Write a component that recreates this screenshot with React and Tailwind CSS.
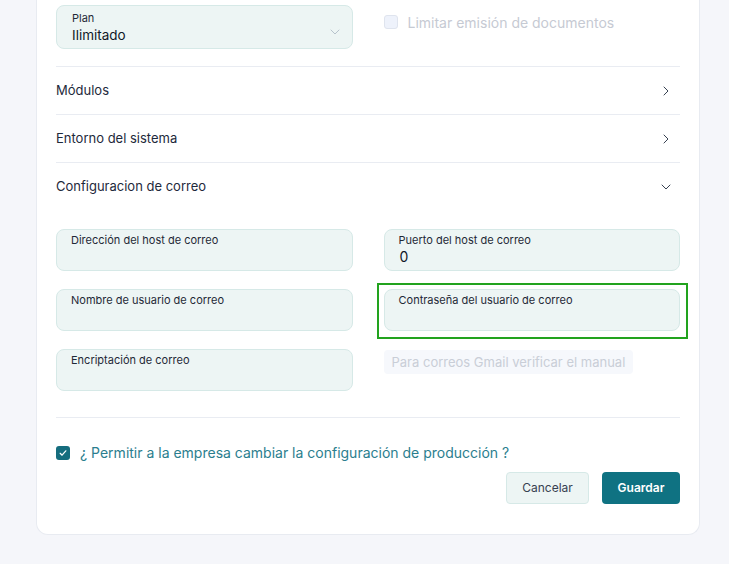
import React from 'react';

// Chevron simple en svg
function Chevron({ dir = 'right', className = '' }) {
    const d = dir === 'right' ? 'M9 6l6 6-6 6' : 'M6 9l6 6 6-6';
    return (
        <svg viewBox="0 0 24 24" className={className} fill="none" stroke="currentColor" strokeWidth="1.5" strokeLinecap="round" strokeLinejoin="round">
            <path d={d} />
        </svg>
    );
}

// Campo con etiqueta flotante
function Field({ label, value }) {
    return (
        <div className="h-[42px] rounded-lg border border-[#d6e9e7] bg-[#edf5f4] px-[14px] pt-[2px]">
            <p className="text-[11px] leading-[16px] text-[#1f2937]">{label}</p>
            {value && <p className="text-[14px] leading-[18px] text-[#111827] pl-[1px]">{value}</p>}
        </div>
    );
}

function Row({ title, open }) {
    return (
        <div className="flex h-[48px] items-center justify-between border-t border-[#e9ecf2] pr-[6px]">
            <span className="text-[13px] text-[#1e293b]">{title}</span>
            <Chevron dir={open ? 'down' : 'right'} className="h-[16px] w-[16px] text-[#374151]" />
        </div>
    );
}

export default function App() {
    return (
        <main className="h-[564px] w-full overflow-hidden bg-[#f5f6fa]" style={{ fontFamily: 'Inter, "Noto Sans", sans-serif' }}>
            <section className="ml-[36px] w-[664px] rounded-b-xl border-x border-b border-[#e8ebf1] bg-white px-[19px] pt-[5px] pb-[30px]">
                {/* Plan */}
                <div className="grid grid-cols-2 gap-x-[31px]">
                    <div className="relative h-[44px] rounded-lg border border-[#d6e9e7] bg-[#edf5f4] px-[15px] pt-[5px]">
                        <p className="text-[11px] leading-[14px] text-[#1f2937]">Plan</p>
                        <p className="text-[13.5px] leading-[20px] text-[#111827]">Ilimitado</p>
                        <Chevron dir="down" className="absolute right-[9px] top-[18px] h-[16px] w-[16px] text-[#b7c3cc]" />
                    </div>
                    <label className="flex h-[34px] items-center gap-[10px]">
                        <span className="h-[14px] w-[14px] rounded-[3px] border border-[#dfe4ee] bg-[#eef2fb]" />
                        <span className="text-[14px] text-[#c6cad3]">Limitar emisión de documentos</span>
                    </label>
                </div>

                {/* Secciones */}
                <div className="mt-[17px]">
                    <Row title="Módulos" />
                    <Row title="Entorno del sistema" />
                    <Row title="Configuracion de correo" open />
                </div>

                {/* Configuración de correo */}
                <div className="mt-[19px] grid grid-cols-2 gap-x-[31px] gap-y-[18px]">
                    <Field label="Dirección del host de correo" />
                    <Field label="Puerto del host de correo" value="0" />
                    <Field label="Nombre de usuario de correo" />
                    <div className="relative">
                        <Field label="Contraseña del usuario de correo" />
                        <div className="pointer-events-none absolute -left-[7px] -right-[8px] -top-[6px] -bottom-[8px] border-2 border-[#22a31e]" />
                    </div>
                    <Field label="Encriptación de correo" />
                    <div>
                        <span className="mt-[1px] inline-block rounded bg-[#f6f8fc] px-[8px] py-[3px] text-[13px] leading-[18px] text-[#c9ced7]">
                            Para correos Gmail verificar el manual
                        </span>
                    </div>
                </div>

                <div className="mt-[26px] border-t border-[#e9ecf2]" />

                {/* Permitir */}
                <label className="mt-[25px] flex items-center gap-[10px]">
                    <span className="flex h-[14px] w-[14px] items-center justify-center rounded-[3px] bg-[#156d7e]">
                        <svg viewBox="0 0 16 16" className="h-[10px] w-[10px]" fill="none" stroke="white" strokeWidth="2" strokeLinecap="round" strokeLinejoin="round">
                            <path d="M3.5 8.5l3 3 6-7" />
                        </svg>
                    </span>
                    <span className="text-[14px] leading-[20px] text-[#2b7e8e]">¿ Permitir a la empresa cambiar la configuración de producción ?</span>
                </label>

                {/* Botones */}
                <div className="mt-[9px] flex justify-end gap-[13px]">
                    <button className="h-[32px] w-[83px] rounded border border-[#d6e9e7] bg-[#edf5f4] text-[12px] text-[#374151]">Cancelar</button>
                    <button className="h-[32px] w-[78px] rounded bg-[#0f7282] text-[12px] font-semibold text-white">Guardar</button>
                </div>
            </section>
        </main>
    );
}
